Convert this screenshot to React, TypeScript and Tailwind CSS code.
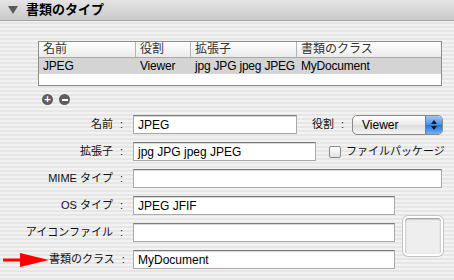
import React from 'react';

const font = "font-['Liberation_Sans','Noto_Sans_CJK_JP',sans-serif]";

const Field = ({ value = '', w }: { value?: string; w: string }) => (
  <div
    className={`${w} h-[19px] flex items-center pl-[4px] bg-white border border-[#a9a9a9] border-t-[#7a7a7a] shadow-[inset_0_1px_0_#d8d8d8] text-[12px] leading-none text-black`}
  >
    {value}
  </div>
);

const Label = ({ children, arrow }: { children: React.ReactNode; arrow?: boolean }) => (
  <div className="w-[124px] h-[19px] flex items-center text-[11px] leading-none text-[#111]">
    {arrow && (
      <svg width="46" height="16" viewBox="0 0 46 16" className="ml-[3px] shrink-0">
        <rect x="0" y="6.5" width="19" height="3" fill="#f00" />
        <polygon points="17,1 46,8 17,15" fill="#f00" />
      </svg>
    )}
    <span className="flex-1 text-right whitespace-nowrap">
      {children}
      <span className="ml-[7px] mr-[1px]">:</span>
    </span>
  </div>
);

const cols = [
  { name: '名前', w: 'w-[97px]', v: 'JPEG' },
  { name: '役割', w: 'w-[55px]', v: 'Viewer' },
  { name: '拡張子', w: 'w-[106px]', v: 'jpg JPG jpeg JPEG' },
  { name: '書類のクラス', w: 'flex-1', v: 'MyDocument' },
];

export default function App() {
  return (
    <div
      className={`${font} w-[454px] h-[280px] overflow-hidden bg-[repeating-linear-gradient(to_bottom,#f2f2f2_0px,#f2f2f2_2px,#e6e6e6_2px,#e6e6e6_4px)]`}
    >
      <div className="h-[21px] flex items-center bg-[linear-gradient(to_bottom,#e4e4e4,#c9c9c9)] border-b border-[#a4a4a4]">
        <svg width="10" height="8" viewBox="0 0 10 8" className="ml-[8px]">
          <polygon points="0,0 10,0 5,8" fill="#5a5a5a" />
        </svg>
        <span className="ml-[8px] text-[13px] font-bold text-black">書類のタイプ</span>
      </div>

      <div className="ml-[38px] mt-[20px] w-[404px] h-[45px] border border-[#8c8c8c] bg-white">
        <div className="flex h-[16px] bg-[linear-gradient(to_bottom,#ffffff,#ebebeb)] border-b border-[#a8a8a8]">
          {cols.map((c, i) => (
            <div
              key={c.name}
              className={`${c.w} pl-[4px] text-[12px] leading-[15px] text-[#333] ${i < 3 ? 'border-r border-[#b4b4b4]' : ''}`}
            >
              {c.name}
            </div>
          ))}
        </div>
        <div className="flex h-[16px] bg-[#d4d4d4]">
          {cols.map((c) => (
            <div key={c.name} className={`${c.w} pl-[4px] text-[12px] leading-[16px] text-black whitespace-nowrap tracking-[-0.2px]`}>
              {c.v}
            </div>
          ))}
        </div>
      </div>

      <div className="ml-[42px] mt-[8px] flex gap-[6px]">
        <div className="w-[11px] h-[11px] rounded-full bg-[#5e5e5e] flex items-center justify-center text-white text-[11px] font-bold leading-none">
          +
        </div>
        <div className="w-[11px] h-[11px] rounded-full bg-[#5e5e5e] flex items-center justify-center">
          <div className="w-[6px] h-[2px] bg-white" />
        </div>
      </div>

      <div className="mt-[10px] flex flex-col gap-[8px]">
        <div className="flex items-center h-[19px]">
          <Label>名前</Label>
          <div className="ml-[9px]">
            <Field value="JPEG" w="w-[164px]" />
          </div>
          <span className="ml-[15px] text-[11px] leading-none text-[#111] whitespace-nowrap">
            役割<span className="ml-[7px]">:</span>
          </span>
          <div className="ml-[8px] w-[91px] h-[20px] rounded-[5px] border border-[#8a8a8a] bg-[linear-gradient(to_bottom,#ffffff,#e9e9e9_50%,#dcdcdc_50%,#f4f4f4)] flex items-center overflow-hidden">
            <span className="flex-1 pl-[9px] text-[12px] leading-none text-black">Viewer</span>
            <div className="w-[17px] h-full bg-[linear-gradient(to_bottom,#9ec6f5,#4a8ee6_50%,#2a72d8_50%,#6fb0f5)] border-l border-[#5a7fb8] flex flex-col items-center justify-center gap-[2px]">
              <svg width="6" height="4" viewBox="0 0 6 4"><polygon points="3,0 6,4 0,4" fill="#0b1a33" /></svg>
              <svg width="6" height="4" viewBox="0 0 6 4"><polygon points="0,0 6,0 3,4" fill="#0b1a33" /></svg>
            </div>
          </div>
        </div>

        <div className="flex items-center h-[19px]">
          <Label>拡張子</Label>
          <div className="ml-[9px]">
            <Field value="jpg JPG jpeg JPEG" w="w-[183px]" />
          </div>
          <div className="ml-[13px] w-[12px] h-[12px] shrink-0 rounded-[2px] border border-[#8a8a8a] bg-[linear-gradient(to_bottom,#ffffff,#e2e2e2)]" />
          <span className="ml-[5px] text-[11px] leading-none text-[#111] whitespace-nowrap">ファイルパッケージ</span>
        </div>

        <div className="flex items-center h-[19px]">
          <Label>MIME タイプ</Label>
          <div className="ml-[9px]">
            <Field w="w-[309px]" />
          </div>
        </div>

        <div className="flex items-center">
          <div className="flex flex-col gap-[8px]">
            <div className="flex items-center h-[19px]">
              <Label>OS タイプ</Label>
              <div className="ml-[9px]">
                <Field value="JPEG JFIF" w="w-[262px]" />
              </div>
            </div>
            <div className="flex items-center h-[19px]">
              <Label>アイコンファイル</Label>
              <div className="ml-[9px]">
                <Field w="w-[262px]" />
              </div>
            </div>
            <div className="flex items-center h-[19px]">
              <Label arrow>書類のクラス</Label>
              <div className="ml-[9px]">
                <Field value="MyDocument" w="w-[262px]" />
              </div>
            </div>
          </div>
          <div className="ml-[8px] mt-[6px] w-[40px] h-[40px] rounded-[5px] border-2 border-white shadow-[0_0_0_1px_#c4c4c4,inset_0_1px_2px_#888] bg-[#eeeeee]" />
        </div>
      </div>
    </div>
  );
}
